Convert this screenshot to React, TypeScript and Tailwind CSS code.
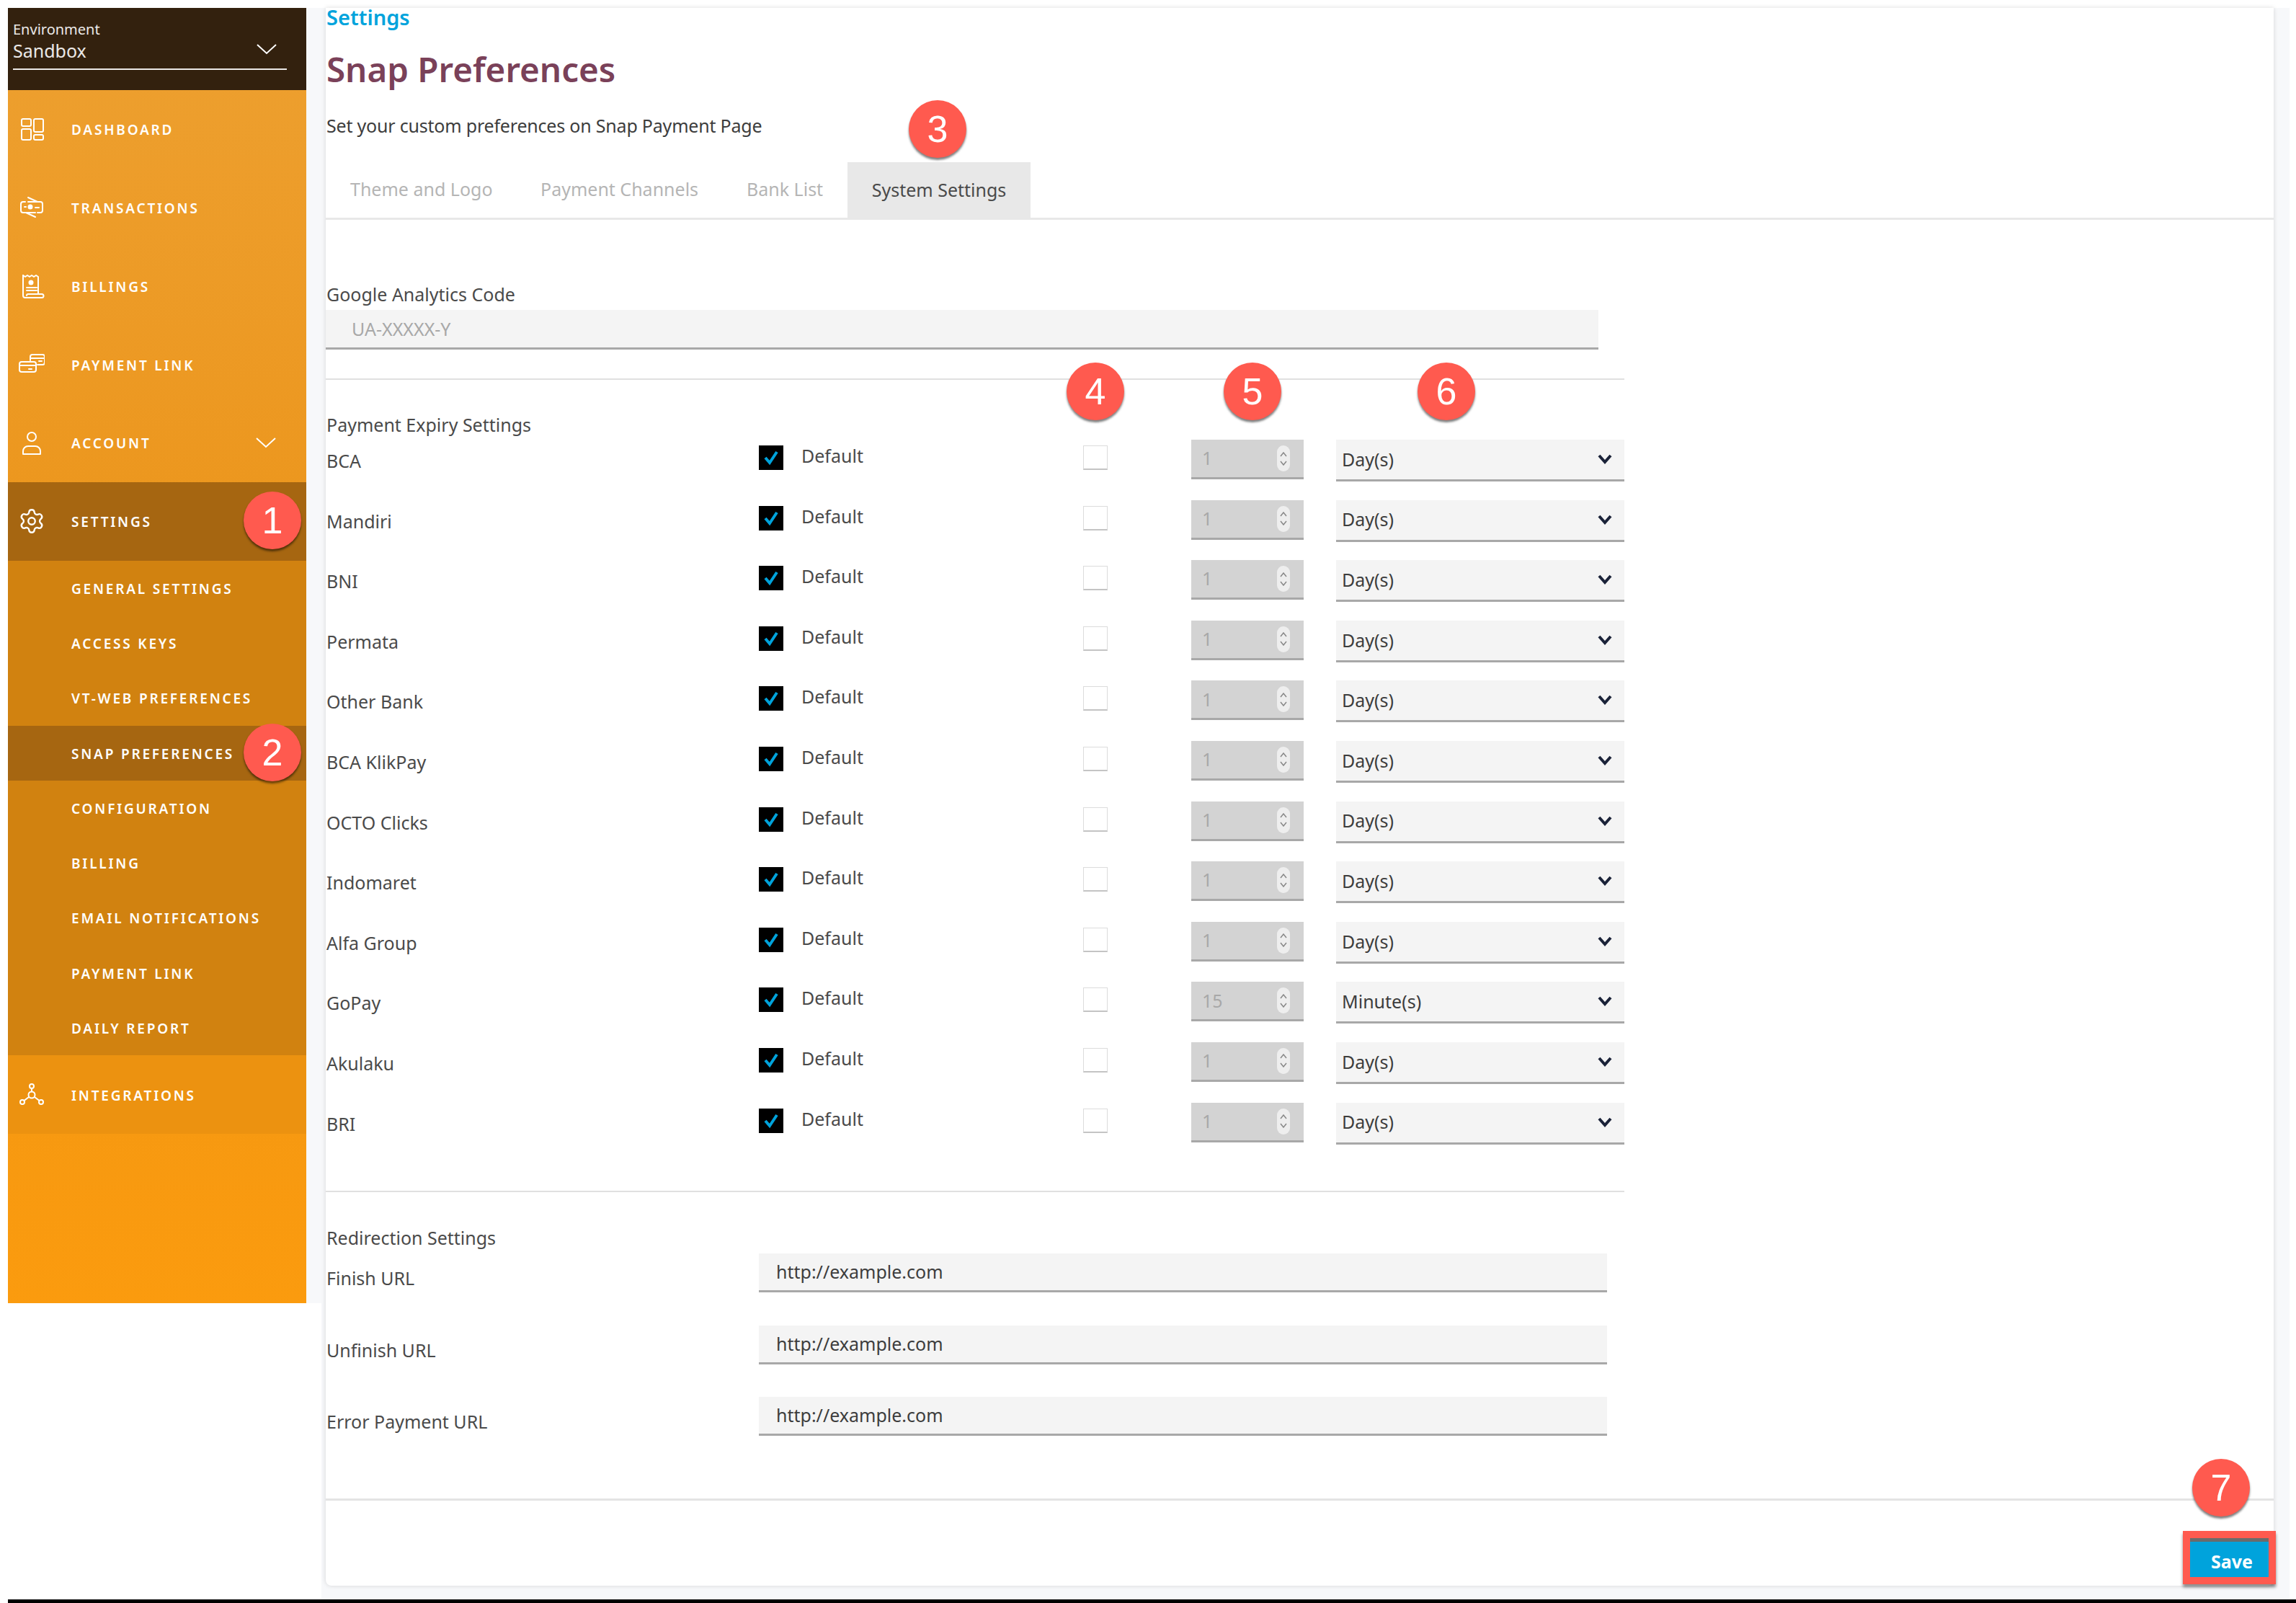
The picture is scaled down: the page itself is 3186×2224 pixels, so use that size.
import React from 'react';
import { Settings as Gear } from 'lucide-react';

const FONT = { fontFamily: '"Noto Sans", "Open Sans", sans-serif' };

const Chevron = ({ className = '' }: { className?: string }) => (
  <svg width="28" height="16" viewBox="0 0 28 16" fill="none" stroke="white" strokeWidth="2" className={className}>
    <path d="M1 1l13 12L27 1" />
  </svg>
);

const Icon = ({ children }: { children: React.ReactNode }) => (
  <svg width="36" height="36" viewBox="0 0 36 36" fill="none" stroke="white" strokeWidth="2" strokeLinecap="round" strokeLinejoin="round" className="shrink-0">
    {children}
  </svg>
);

const DashboardIcon = () => (
  <Icon>
    <rect x="4" y="4" width="13" height="10" rx="2" />
    <rect x="21" y="4" width="13" height="18" rx="2" />
    <rect x="4" y="18" width="13" height="15" rx="2" />
    <rect x="21" y="26" width="13" height="7" rx="2" />
  </Icon>
);

const TransactionIcon = () => (
  <Icon>
    <path d="M9 10H6a3 3 0 0 0-3 3v9a3 3 0 0 0 3 3h3" />
    <path d="M26 25h4a3 3 0 0 0 3-3v-9a3 3 0 0 0-3-3h-3" />
    <path d="M13 4l13 6H13" />
    <path d="M23 31L10 25h13" />
    <circle cx="16" cy="17" r="2.5" fill="white" />
    <path d="M8 17h2M23 18h5" />
  </Icon>
);

const BillingIcon = () => (
  <Icon>
    <path d="M6 3l3 2 3-2 3 2 3-2 3 2 3-2 3 2v24" />
    <path d="M6 3v28a3 3 0 0 0 3 3h23a2.500 2.500 0 0 0 0-5H13a2 2 0 0 0-2 2" />
    <circle cx="17" cy="13" r="2.5" fill="white" />
    <path d="M11 20h14M11 24h14" />
  </Icon>
);

const PaymentLinkIcon = () => (
  <Icon>
    <path d="M16 12V7a3 3 0 0 1 3-3h14a3 3 0 0 1 3 3v8a3 3 0 0 1-3 3H26" />
    <path d="M16 9h20M28 13h4" />
    <rect x="1" y="14" width="23" height="14" rx="3" />
    <path d="M1 19h23M14 24h4" />
  </Icon>
);

const AccountIcon = () => (
  <Icon>
    <circle cx="18" cy="9" r="6" />
    <path d="M6 33v-4a7 7 0 0 1 7-7h10a7 7 0 0 1 7 7v4z" />
  </Icon>
);

const IntegrationIcon = () => (
  <Icon>
    <circle cx="18" cy="18" r="4.500" />
    <circle cx="18" cy="6" r="3" />
    <circle cx="5" cy="28" r="3" />
    <circle cx="31" cy="28" r="3" />
    <path d="M18 9v4.500M14 21l-6.500 5M22 21l6.500 5" />
  </Icon>
);

const MainItem = ({ icon, label, chevron, active, bg = '' }: { icon: React.ReactNode; label: string; chevron?: boolean; active?: boolean; bg?: string }) => (
  <div className={`flex items-center h-[108.800px] pl-[15px] gap-[37px] ${active ? 'bg-[#a66611]' : bg}`}>
    {icon}
    <span className="pt-[2px] text-[19px] font-semibold tracking-[2.800px] text-white">{label}</span>
    {chevron && <Chevron className="ml-auto mr-[42px]" />}
  </div>
);

const subItems = ['GENERAL SETTINGS', 'ACCESS KEYS', 'VT-WEB PREFERENCES', 'SNAP PREFERENCES', 'CONFIGURATION', 'BILLING', 'EMAIL NOTIFICATIONS', 'PAYMENT LINK', 'DAILY REPORT'];

const Badge = ({ n, className }: { n: number; className: string }) => (
  <div className={`absolute w-[80px] h-[80px] rounded-full bg-[#ff5a4f] text-white flex items-center justify-center text-[52px] shadow-[0_3px_3px_rgba(0,0,0,0.5)] ${className}`} style={{ fontFamily: '"Liberation Sans", sans-serif' }}>
    {n}
  </div>
);

const expiryRows = [
  ['BCA', '1', 'Day(s)'],
  ['Mandiri', '1', 'Day(s)'],
  ['BNI', '1', 'Day(s)'],
  ['Permata', '1', 'Day(s)'],
  ['Other Bank', '1', 'Day(s)'],
  ['BCA KlikPay', '1', 'Day(s)'],
  ['OCTO Clicks', '1', 'Day(s)'],
  ['Indomaret', '1', 'Day(s)'],
  ['Alfa Group', '1', 'Day(s)'],
  ['GoPay', '15', 'Minute(s)'],
  ['Akulaku', '1', 'Day(s)'],
  ['BRI', '1', 'Day(s)'],
];

const ExpiryRow = ({ name, value, unit }: { name: string; value: string; unit: string }) => (
  <div className="flex items-start h-[83.600px] text-[25px] text-[#4a4a4a]">
    <div className="w-[601px] pl-[1px] pt-[9px] leading-[40px]">{name}</div>
    <div className="mt-[8px] w-[34px] h-[34px] bg-black flex items-center justify-center">
      <svg width="22" height="22" viewBox="0 0 22 22" fill="none" stroke="#00a3dc" strokeWidth="4">
        <path d="M3 11l6 7L19 3" />
      </svg>
    </div>
    <div className="ml-[25px] w-[391px] mt-[5px] leading-[34px]">Default</div>
    <div className="mt-[8px] w-[34px] h-[34px] bg-white border border-[#dcdcdc] border-b-2 border-b-[#c4c4c4]" />
    <div className="ml-[116px] w-[156px] h-[55px] bg-[#d3d3d3] border-b-[3px] border-[#a8a8a8] flex items-center pl-[15px] pr-[19px] text-[#a8a8a8]">
      <span>{value}</span>
      <div className="ml-auto w-[18px] h-[36px] rounded-full bg-[#eeeeee] flex flex-col items-center justify-center gap-[5px]">
        <svg width="10" height="7" viewBox="0 0 10 7" fill="none" stroke="#888888" strokeWidth="1.500"><path d="M1 6l4-5 4 5" /></svg>
        <svg width="10" height="7" viewBox="0 0 10 7" fill="none" stroke="#888888" strokeWidth="1.500"><path d="M1 1l4 5 4-5" /></svg>
      </div>
    </div>
    <div className="ml-[45px] w-[400px] h-[58px] bg-[#f4f4f4] border-b-[3px] border-[#a8a8a8] flex items-center pl-[8px] pr-[17px] text-[#3d3d3d]">
      <span>{unit}</span>
      <svg width="20" height="14" viewBox="0 0 20 14" fill="none" stroke="#1a2238" strokeWidth="4" className="ml-auto -mt-[1px]">
        <path d="M2 2l8 9 8-9" />
      </svg>
    </div>
  </div>
);

const UrlRow = ({ label, className = '' }: { label: string; className?: string }) => (
  <div className={`flex items-start h-[54px] text-[25px] text-[#4a4a4a] ${className}`}>
    <div className="w-[601px] pl-[1px] pt-[14px] leading-[40px]">{label}</div>
    <input
      readOnly
      value="http://example.com"
      className="w-[1177px] h-[54px] bg-[#f4f4f4] border-b-[3px] border-[#a8a8a8] pl-[24px] pb-[2px] text-[#3d3d3d] outline-none"
    />
  </div>
);

export default function App() {
  return (
    <div className="w-[3186px] h-[2224px] bg-white flex flex-col pl-[11px] overflow-hidden" style={FONT}>
      <div className="flex-1 flex pt-[11px] pr-[9px]">
        {/* Sidebar */}
        <aside className="relative w-[414px] h-[1797px] shrink-0 flex flex-col bg-gradient-to-b from-[#eda030] via-[#ec9416] to-[#fb9b0e]">
          <div className="h-[114px] bg-[#33210e] pl-[7px] pr-[27px] text-white/90">
            <div className="pt-[18px] text-[20px] leading-[24px]">Environment</div>
            <div className="text-[25px] leading-[34px]">Sandbox</div>
            <div className="relative border-b-2 border-white/90 mt-[8px]">
              <Chevron className="absolute right-[14px] -top-[34px]" />
            </div>
          </div>
          <MainItem icon={<DashboardIcon />} label="DASHBOARD" />
          <MainItem icon={<TransactionIcon />} label="TRANSACTIONS" />
          <MainItem icon={<BillingIcon />} label="BILLINGS" />
          <MainItem icon={<PaymentLinkIcon />} label="PAYMENT LINK" />
          <MainItem icon={<AccountIcon />} label="ACCOUNT" chevron />
          <MainItem icon={<Gear size={38} strokeWidth={1.500} color="white" className="shrink-0 -ml-[1px] -mr-[1px]" />} label="SETTINGS" active />
          <div className="bg-[#d18210]">
            {subItems.map((s) => (
              <div key={s} className={`h-[76.300px] flex items-center pl-[88px] pt-[2px] text-[19px] font-semibold tracking-[2.800px] text-white ${s === 'SNAP PREFERENCES' ? 'bg-[#a66611]' : ''}`}>
                {s}
              </div>
            ))}
          </div>
          <MainItem icon={<IntegrationIcon />} label="INTEGRATIONS" bg="bg-[#ec9210]" />
          <Badge n={1} className="left-[327px] top-[671px]" />
          <Badge n={2} className="left-[327px] top-[993px]" />
        </aside>

        <div className="w-[21px] h-[1797px] bg-[#f7f8fa] shrink-0" />

        {/* Content area */}
        <div className="flex-1 bg-[#f7f8fa] pl-[6px] pr-[22px] pb-[19px]">
          <main className="relative h-full bg-white rounded-b-[8px] shadow-[0_0_6px_rgba(0,0,0,0.14)]">
            <div className="pl-[1px] h-[26px] leading-[26px] text-[29px] font-semibold text-[#00a3dc]">Settings</div>
            <h1 className="pl-[1px] mt-[29px] h-[60px] leading-[60px] text-[47.500px] font-semibold text-[#7a4159]">Snap Preferences</h1>
            <p className="pl-[1px] mt-[28px] h-[40px] leading-[40px] text-[25px] tracking-[-0.200px] text-[#3d3d3d]">Set your custom preferences on Snap Payment Page</p>

            <div className="mt-[31px] h-[80px] border-b-[3px] border-[#e8e8e8] flex text-[25px] text-[#b5b5b5]">
              <div className="pl-[34px] w-[298px] leading-[74px]">Theme and Logo</div>
              <div className="w-[286px] leading-[74px]">Payment Channels</div>
              <div className="w-[140px] leading-[74px]">Bank List</div>
              <div className="w-[254px] bg-[#e8e8e8] text-center leading-[76px] text-[#4a4a4a]">System Settings</div>
            </div>

            <div className="mt-[83px] pl-[1px] h-[40px] leading-[40px] text-[25px] text-[#4a4a4a]">Google Analytics Code</div>
            <input
              readOnly
              placeholder="UA-XXXXX-Y"
              className="block mt-[2px] w-[1766px] h-[55px] bg-[#f4f4f4] border-b-[3px] border-[#a8a8a8] pl-[36px] text-[25px] placeholder:text-[#a8a8a8] outline-none"
            />
            <div className="mt-[40px] w-[1802px] h-[2px] bg-[#e0e0e0]" />

            <div className="mt-[42px] pl-[1px] h-[40px] leading-[40px] text-[25px] text-[#4a4a4a]">Payment Expiry Settings</div>
            <div className="mt-[1px]">
              {expiryRows.map(([name, value, unit]) => (
                <ExpiryRow key={name} name={name} value={value} unit={unit} />
              ))}
            </div>
            <div className="mt-[39px] w-[1802px] h-[2px] bg-[#e0e0e0]" />

            <div className="mt-[43px] pl-[1px] h-[40px] leading-[40px] text-[25px] text-[#4a4a4a]">Redirection Settings</div>
            <UrlRow label="Finish URL" className="mt-[2px]" />
            <UrlRow label="Unfinish URL" className="mt-[46px]" />
            <UrlRow label="Error Payment URL" className="mt-[45px]" />
            <div className="mt-[87px] h-[3px] bg-[#e4e4e4]" />

            <div className="mt-[42px] flex justify-end -mr-[3px]">
              <button className="w-[129px] h-[74px] border-[10px] border-[#ff5a4f] bg-[#00a3dc] text-white text-[25px] font-bold shadow-[0_4px_4px_rgba(0,0,0,0.45)]" style={FONT}>
                <div className="h-[5px] bg-[#6b6b6b]" />
                <div className="leading-[54px] pl-[7px]">Save</div>
              </button>
            </div>

            <Badge n={3} className="left-[809px] top-[128px]" />
            <Badge n={4} className="left-[1028px] top-[492px]" />
            <Badge n={5} className="left-[1246px] top-[492px]" />
            <Badge n={6} className="left-[1515px] top-[492px]" />
            <Badge n={7} className="left-[2590px] top-[2013px]" />
          </main>
        </div>
      </div>
      <div className="h-[5px] bg-black" />
    </div>
  );
}
